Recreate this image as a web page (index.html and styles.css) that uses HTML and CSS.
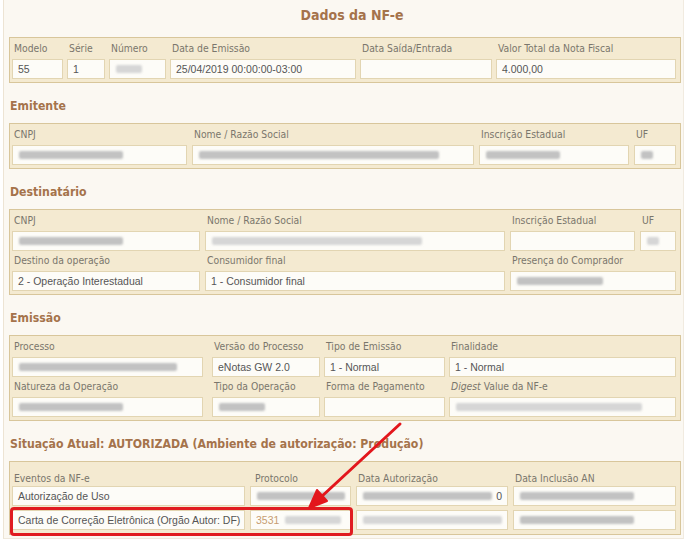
FILE: index.html
```html
<!DOCTYPE html>
<html lang="pt-BR">
<head>
<meta charset="utf-8">
<title>Dados da NF-e</title>
<link rel="stylesheet" href="styles.css">
</head>
<body>
<div class="screen">
  <div class="page">
    <h1 class="title">Dados da NF-e</h1>
    <div class="box g-dados">
      <div class="cell"><div class="lbl">Modelo</div><div class="inp">55</div></div>
      <div class="cell"><div class="lbl">Série</div><div class="inp">1</div></div>
      <div class="cell"><div class="lbl">Número</div><div class="inp"><span class="blur b26 light"></span></div></div>
      <div class="cell"><div class="lbl">Data de Emissão</div><div class="inp">25/04/2019 00:00:00-03:00</div></div>
      <div class="cell"><div class="lbl">Data Saída/Entrada</div><div class="inp"></div></div>
      <div class="cell"><div class="lbl">Valor Total da Nota Fiscal</div><div class="inp">4.000,00</div></div>
    </div>

    <h2 class="sec">Emitente</h2>
    <div class="box g-emit">
      <div class="cell"><div class="lbl">CNPJ</div><div class="inp"><span class="blur b104"></span></div></div>
      <div class="cell"><div class="lbl">Nome / Razão Social</div><div class="inp"><span class="blur b240"></span></div></div>
      <div class="cell"><div class="lbl">Inscrição Estadual</div><div class="inp"><span class="blur b74"></span></div></div>
      <div class="cell"><div class="lbl">UF</div><div class="inp"><span class="blur b12"></span></div></div>
    </div>

    <h2 class="sec">Destinatário</h2>
    <div class="box g-dest">
      <div class="cell"><div class="lbl">CNPJ</div><div class="inp"><span class="blur b104"></span></div></div>
      <div class="cell"><div class="lbl">Nome / Razão Social</div><div class="inp"><span class="blur b210 light"></span></div></div>
      <div class="cell"><div class="lbl">Inscrição Estadual</div><div class="inp"></div></div>
      <div class="cell"><div class="lbl">UF</div><div class="inp"><span class="blur b12 light"></span></div></div>
      <div class="cell"><div class="lbl">Destino da operação</div><div class="inp">2 - Operação Interestadual</div></div>
      <div class="cell"><div class="lbl">Consumidor final</div><div class="inp">1 - Consumidor final</div></div>
      <div class="cell span2"><div class="lbl">Presença do Comprador</div><div class="inp"><span class="blur b86"></span></div></div>
    </div>

    <h2 class="sec">Emissão</h2>
    <div class="box g-emis">
      <div class="cell shrink"><div class="lbl">Processo</div><div class="inp"><span class="blur b158"></span></div></div>
      <div class="cell"><div class="lbl">Versão do Processo</div><div class="inp">eNotas GW 2.0</div></div>
      <div class="cell"><div class="lbl">Tipo de Emissão</div><div class="inp">1 - Normal</div></div>
      <div class="cell"><div class="lbl">Finalidade</div><div class="inp">1 - Normal</div></div>
      <div class="cell shrink"><div class="lbl">Natureza da Operação</div><div class="inp"><span class="blur b104"></span></div></div>
      <div class="cell"><div class="lbl">Tipo da Operação</div><div class="inp"><span class="blur b46"></span></div></div>
      <div class="cell"><div class="lbl">Forma de Pagamento</div><div class="inp"></div></div>
      <div class="cell"><div class="lbl"><i>Digest</i> Value da NF-e</div><div class="inp"><span class="blur b186 light"></span></div></div>
    </div>

    <h2 class="sec">Situação Atual: AUTORIZADA (Ambiente de autorização: Produção)</h2>
    <div class="box g-sit">
      <div class="lbl">Eventos da NF-e</div>
      <div class="lbl ind">Protocolo</div>
      <div class="lbl">Data Autorização</div>
      <div class="lbl">Data Inclusão AN</div>
      <div class="inp">Autorização de Uso</div>
      <div class="inp"><span class="blur b90"></span></div>
      <div class="inp"><span class="blur b140"></span><span class="tail">0</span></div>
      <div class="inp"><span class="blur b114"></span></div>
      <div class="inp">Carta de Correção Eletrônica (Orgão Autor: DF)</div>
      <div class="inp"><span class="link">3531</span><span class="blur b56 light"></span></div>
      <div class="inp"><span class="blur b144 light"></span></div>
      <div class="inp"><span class="blur b114"></span></div>
      <div class="highlight"></div>
    </div>
  </div>
  <svg class="arrow" width="700" height="548" viewBox="0 0 700 548">
    <line x1="400" y1="424" x2="320" y2="498" stroke="#e3161c" stroke-width="3" stroke-linecap="round"/>
    <polygon points="309,508 317,490 327,501" fill="#e3161c" stroke="#e3161c" stroke-width="2" stroke-linejoin="round"/>
  </svg>
</div>
</body>
</html>
```

FILE: styles.css
```css
* { box-sizing: border-box; }
html, body { margin: 0; padding: 0; background: #ffffff; }
.screen { position: relative; width: 700px; height: 548px; overflow: hidden; }
.page {
  margin-left: 3px;
  width: 681px;
  height: 539px;
  background: #fbf8f2;
  border-left: 1px solid #ede4d4;
  border-right: 1px solid #f1ebe0;
  border-bottom: 1px solid #efe8dc;
  padding: 7px 0 0 5px;
  font-family: "DejaVu Sans Condensed", "DejaVu Sans", sans-serif;
}
.title {
  margin: 0 0 14px 0;
  padding-left: 12px;
  text-align: center;
  font-size: 14px;
  line-height: 16px;
  font-weight: bold;
  color: #a5734b;
}
.sec {
  margin: 15px 0 9px 1px;
  font-size: 12.2px;
  line-height: 16px;
  font-weight: bold;
  color: #a5734b;
}
.box {
  position: relative;
  width: 672px;
  background: #f4ead1;
  border: 1px solid #d8c69b;
  padding: 4px 4px 3px 2px;
  display: grid;
  column-gap: 5px;
  row-gap: 3px;
}
.g-dados { grid-template-columns: 51px 38px 57px 186px 132px 1fr; column-gap: 4px; }
.g-emit { grid-template-columns: 175px 282px 150px 1fr; }
.g-dest { grid-template-columns: 188px 300px 125px 1fr; }
.g-emis { grid-template-columns: 196px 108px 121px 1fr; column-gap: 4px; }
.g-sit { grid-template-columns: 233px 101px 152px 1fr; row-gap: 4px; padding-top: 10px; padding-bottom: 4px; }
.g-sit .lbl { margin-bottom: -3px; }
.span2 { grid-column: span 2; }
.shrink .inp { margin-right: 5px; }
.lbl {
  font-size: 10.3px;
  line-height: 13px;
  color: #7a766c;
  padding-left: 2px;
  margin-bottom: 4px;
  white-space: nowrap;
}
.lbl.ind { padding-left: 5px; }
.inp {
  height: 20px;
  background: #fdfcf8;
  border: 1px solid #e2d5b2;
  padding: 0 5px;
  font-family: "Liberation Sans", Arial, sans-serif;
  font-size: 10.5px;
  line-height: 18px;
  color: #555555;
  white-space: nowrap;
  overflow: hidden;
  display: flex;
  align-items: center;
}
.blur {
  display: inline-block;
  height: 8px;
  background: #c2c2c2;
  border-radius: 2px;
  filter: blur(1.3px);
  margin-left: 1px;
}
.blur.light { background: #d6d6d6; }
.b12 { width: 12px; }
.b26 { width: 26px; }
.b46 { width: 46px; }
.b56 { width: 56px; margin-left: 6px; }
.b74 { width: 74px; }
.b86 { width: 86px; }
.b90 { width: 90px; }
.b104 { width: 104px; }
.b114 { width: 114px; }
.b140 { width: 140px; }
.b144 { width: 144px; }
.b158 { width: 158px; }
.b186 { width: 186px; }
.b210 { width: 210px; }
.b240 { width: 240px; }
.tail { margin-left: 4px; }
.link { color: #c79c72; }
.highlight {
  position: absolute;
  left: 0px;
  top: 45px;
  width: 343px;
  height: 29px;
  border: 3px solid #e01b20;
  border-radius: 4px;
}
.arrow { position: absolute; left: 0; top: 0; pointer-events: none; }
```
